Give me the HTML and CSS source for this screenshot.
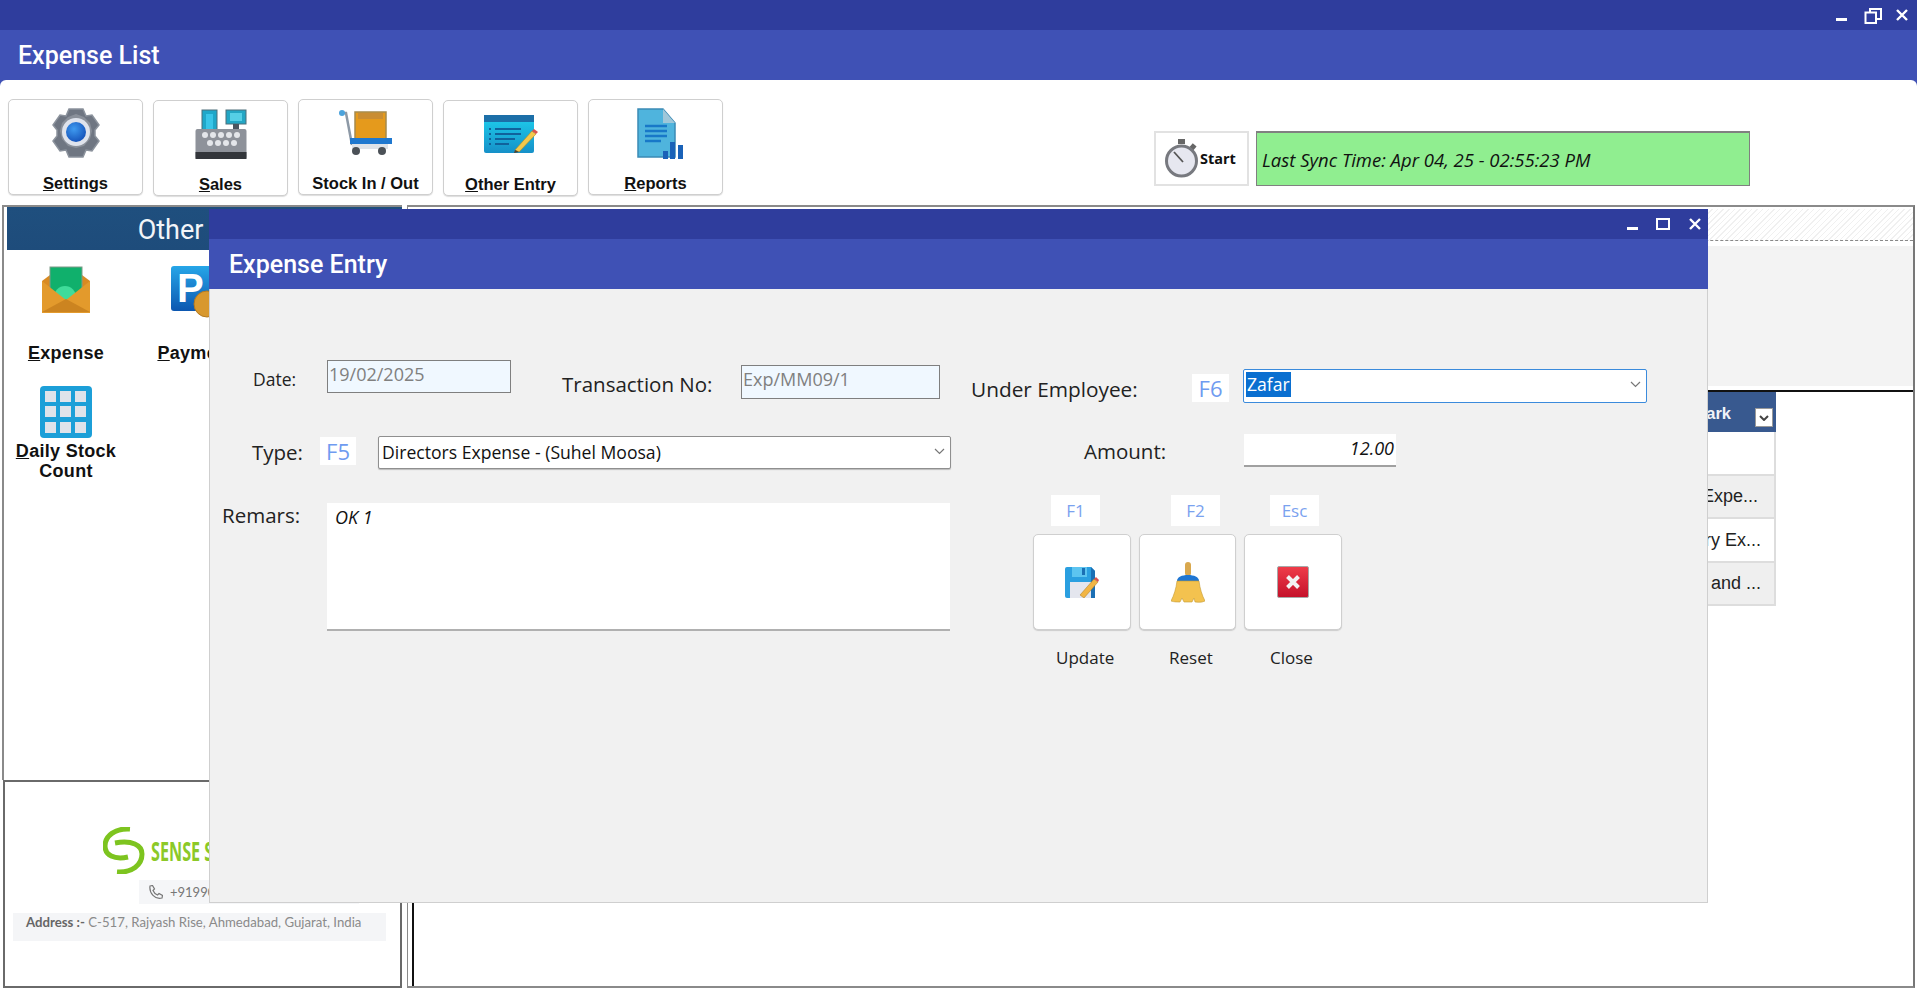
FILE: index.html
```html
<!DOCTYPE html>
<html lang="en">
<head>
<meta charset="utf-8">
<title>Expense List</title>
<link rel="stylesheet" href="styles.css">
</head>
<body>
<div class="app">
  <div class="titlebar">
    <div class="winctl">
      <svg class="ctl-min" width="11" height="4" viewBox="0 0 11 4"><rect y="0" width="11" height="3" fill="#fff"/></svg>
      <svg class="ctl-res" width="18" height="16" viewBox="0 0 18 16"><path d="M6 4V1h11v10h-4M1.500 4.500h10.500v10.500H1.500z" fill="none" stroke="#fff" stroke-width="2"/></svg>
      <svg class="ctl-x" width="12" height="12" viewBox="0 0 12 12"><path d="M1 1l10 10M11 1L1 11" stroke="#fff" stroke-width="2.400"/></svg>
    </div>
  </div>
  <div class="header"><span class="header-title">Expense List</span></div>
  <div class="toolbar-wrap">
  <div class="toolbar">
    <button class="tbtn">
      <svg width="54" height="50" viewBox="3 0 48 50"><defs><radialGradient id="gb" cx=".4" cy=".35" r=".7"><stop offset="0" stop-color="#3f9bf0"/><stop offset="1" stop-color="#1450b8"/></radialGradient></defs><path d="M20 1h14l3 7 6-1 7 10-4 5 0 6 4 5-7 10-6-1-3 7H20l-3-7-6 1-7-10 4-5 0-6-4-5 7-10 6 1z" fill="#6f7682" stroke="#8c939d" stroke-width="1.500"/><path d="M27 6l8 3 6 6 2 8-2 8-6 7-8 2-8-2-6-7-2-8 2-8 6-6z" fill="#8a909a"/><circle cx="27" cy="24" r="14" fill="#dfe3ec"/><circle cx="27" cy="24" r="10" fill="url(#gb)"/></svg>
      <span class="tlabel"><u>S</u>ettings</span>
    </button>
    <button class="tbtn tbtn-low">
      <svg width="52" height="51" viewBox="0 0 52 51"><rect x="7" y="1" width="15" height="22" fill="#1ea7c9" stroke="#4d6e7a"/><rect x="11" y="5" width="7" height="18" fill="#39c5e8"/><rect x="31" y="1" width="20" height="14" fill="#23a6c4" stroke="#4d6e7a"/><rect x="35" y="4" width="12" height="8" fill="#55cfe6"/><rect x="38" y="15" width="6" height="6" fill="#4c5560"/><rect x="0.500" y="20" width="51" height="30" rx="2" fill="#8e929a"/><rect x="0.500" y="43" width="51" height="7" fill="#33363b"/><g fill="#e4e6ea"><circle cx="10" cy="26" r="3"/><circle cx="18" cy="26" r="3"/><circle cx="26" cy="26" r="3"/><circle cx="34" cy="26" r="3"/><circle cx="42" cy="26" r="3"/><circle cx="15" cy="34" r="3"/><circle cx="23" cy="34" r="3"/><circle cx="31" cy="34" r="3"/><circle cx="39" cy="34" r="3"/></g></svg>
      <span class="tlabel"><u>S</u>ales</span>
    </button>
    <button class="tbtn">
      <svg class="ic-cart" width="54" height="46" viewBox="0 0 54 46"><rect x="16" y="2" width="31" height="30" fill="#e59a1c" stroke="#a58a4d" stroke-width="1.500"/><rect x="19" y="3" width="25" height="6" fill="#c98d33"/><path d="M3 3l4 0 6 32" fill="none" stroke="#8d99a6" stroke-width="2.500"/><circle cx="3" cy="3" r="3" fill="#4ba3dc"/><rect x="11" y="28" width="42" height="6" fill="#1f78cf"/><rect x="13" y="34" width="36" height="5" fill="#dfe3e8"/><circle cx="17" cy="41" r="4" fill="#4b5157"/><circle cx="43" cy="41" r="4" fill="#4b5157"/></svg>
      <span class="tlabel">Stock In / Out</span>
    </button>
    <button class="tbtn tbtn-low">
      <svg class="ic-form" width="56" height="40" viewBox="0 0 56 40"><defs><linearGradient id="gf" x1="0" y1="0" x2="0" y2="1"><stop offset="0" stop-color="#1ed0ee"/><stop offset="1" stop-color="#1690c8"/></linearGradient></defs><rect x="1" y="1" width="50" height="38" rx="2" fill="url(#gf)"/><rect x="1" y="1" width="50" height="7" fill="#1c6fa8"/><path d="M12 15h26M12 20h26M12 25h20M12 30h14" stroke="#10629c" stroke-width="2"/><path d="M6 15h2M6 20h2M6 25h2M6 30h2" stroke="#10629c" stroke-width="2"/><path d="M32 36l17-19 4 3-17 18z" fill="#f4c84c" stroke="#b58a20" stroke-width=".6"/><path d="M49 17l2-2 4 3-2 2z" fill="#d9534f"/><path d="M32 36l-1 3 5-1z" fill="#54422a"/></svg>
      <span class="tlabel"><u>O</u>ther Entry</span>
    </button>
    <button class="tbtn">
      <svg class="ic-report" width="48" height="52" viewBox="0 0 48 52"><path d="M1 1h25l12 14v34H1z" fill="#4fb4dd" stroke="#3b8ab5" stroke-width="1.500"/><path d="M26 1v14h12z" fill="#9fc7d9"/><path d="M8 18h22M8 23h22M8 28h22M8 33h16" stroke="#1878c8" stroke-width="2.500"/><g fill="#1a62b8"><rect x="26" y="43" width="5" height="8"/><rect x="33" y="34" width="5" height="17"/><rect x="41" y="37" width="5" height="14"/></g></svg>
      <span class="tlabel"><u>R</u>eports</span>
    </button>
    <button class="start">
      <svg width="34" height="39" viewBox="0 0 34 39"><rect x="13" y="0" width="7" height="5" fill="#666"/><rect x="26" y="5" width="5" height="5" transform="rotate(40 28 7)" fill="#666"/><circle cx="16.500" cy="22" r="15" fill="#e6e7f0" stroke="#77797f" stroke-width="3"/><path d="M9 13l9 10" stroke="#555" stroke-width="1.800"/></svg>
      <span class="start-text">Start</span>
    </button>
    <div class="sync">Last Sync Time: Apr 04, 25 - 02:55:23 PM</div>
  </div>
  </div>

  <div class="main">
    <div class="left">
      <div class="left-top">
        <div class="panel-head">Other Entry</div>
        <div class="tiles">
          <div class="tile">
            <svg class="tile-icon" width="48" height="48" viewBox="0 0 48 48"><path d="M0 15L8 9h32l8 6v31H0z" fill="#d98a22"/><rect x="8" y="1" width="32" height="30" fill="#10b06c" stroke="#7e9a88"/><circle cx="23" cy="31" r="11" fill="#3fdc9a"/><path d="M0 15l24 19 24-19v32H0z" fill="#e39a2c"/><path d="M0 46l24-13 24 13z" fill="#cc8420"/></svg>
            <span class="tile-label"><u>E</u>xpense</span>
          </div>
          <div class="tile">
            <svg class="tile-icon ic-pay" width="62" height="52" viewBox="0 0 62 52"><defs><linearGradient id="gp" x1="0" y1="0" x2="0" y2="1"><stop offset="0" stop-color="#26a6e8"/><stop offset="1" stop-color="#0c57b0"/></linearGradient></defs><rect x="1" y="0" width="44" height="45" rx="3" fill="url(#gp)"/><text class="p-glyph" x="7" y="36">P</text><circle cx="37" cy="38" r="13" fill="#d8982e" stroke="#b57a20"/></svg>
            <span class="tile-label"><u>P</u>ayment</span>
          </div>
          <div class="tile tile-wide">
            <svg class="tile-icon" width="52" height="52" viewBox="0 0 52 52"><rect width="52" height="52" rx="4" fill="#1c9fd8"/><g fill="#dfe3ea"><rect x="5" y="5" width="11" height="11"/><rect x="20" y="5" width="11" height="11"/><rect x="35" y="5" width="11" height="11"/><rect x="5" y="20" width="11" height="11"/><rect x="20" y="20" width="11" height="11"/><rect x="35" y="20" width="11" height="11"/><rect x="5" y="36" width="11" height="11"/><rect x="20" y="36" width="11" height="11"/><rect x="35" y="36" width="11" height="11"/></g></svg>
            <span class="tile-label tile-label-tight"><u>D</u>aily Stock<br>Count</span>
          </div>
        </div>
      </div>
      <div class="left-bottom">
        <div class="logo-row">
          <svg class="logo-mark" width="42" height="47" viewBox="0 0 42 47"><path d="M27 2C12 1 2 9 2 19c0 9 9 14 23 11M14 45c15 1 25-7 25-18 0-9-10-14-27-11" fill="none" stroke="#7dc41f" stroke-width="5"/></svg>
          <span class="logo-text">SENSE SOFTWARE SOLUTIONS</span>
        </div>
        <div class="phone">
          <svg width="15" height="15" viewBox="0 0 15 15"><path d="M2 1l2.500-.5 2 3.500-1.500 1.500c.8 2 2.300 3.500 4.500 4.500L11 8.500l3.500 2-.5 2.500c-7 2-13-5-12-12z" fill="none" stroke="#777" stroke-width="1.200"/></svg>
          <span>+919909000000</span>
        </div>
        <div class="address"><b>Address :-</b> C-517, Rajyash Rise, Ahmedabad, Gujarat, India</div>
      </div>
    </div>
    <div class="right">
      <div class="right-top">
        <div class="hatch"></div>
        <div class="summary"></div>
      </div>
      <div class="grid-area">
      <div class="grid">
        <div class="grid-head"><span class="head-text">Remark</span><span class="filter"><svg width="10" height="6" viewBox="0 0 10 6"><path d="M1 1l4 4 4-4" fill="none" stroke="#444" stroke-width="2"/></svg></span></div>
        <div class="grid-row"></div>
        <div class="grid-row alt"><span class="cell cell-a">Directors Expe...</span></div>
        <div class="grid-row"><span class="cell cell-b">Salary Ex...</span></div>
        <div class="grid-row alt"><span class="cell cell-b">Tea and ...</span></div>
      </div>
      </div>
    </div>
  </div>

  <div class="modal">
    <div class="titlebar modal-bar">
      <div class="winctl modal-ctl">
        <svg class="mctl-min" width="11" height="3" viewBox="0 0 11 3"><rect width="11" height="3" fill="#fff"/></svg>
        <svg class="mctl-max" width="14" height="12" viewBox="0 0 14 12"><rect x="1" y="1" width="12" height="10" fill="none" stroke="#fff" stroke-width="2"/></svg>
        <svg class="mctl-x" width="12" height="12" viewBox="0 0 12 12"><path d="M1 1l10 10M11 1L1 11" stroke="#fff" stroke-width="2.400"/></svg>
      </div>
    </div>
    <div class="header modal-head"><span class="modal-title">Expense Entry</span></div>
    <div class="modal-body">
      <div class="col-left">
        <div class="row row-1">
          <label class="lbl lbl-date">Date:</label>
          <input class="ro ro-date" value="19/02/2025" readonly>
          <label class="lbl lbl-txn">Transaction No:</label>
          <input class="ro ro-txn" value="Exp/MM09/1" readonly>
        </div>
        <div class="row row-2">
          <label class="lbl lbl-type">Type:</label>
          <span class="key key-f5">F5</span>
          <div class="combo combo-type"><span>Directors Expense - (Suhel Moosa)</span><svg width="11" height="7" viewBox="0 0 11 7"><path d="M1 1l4.500 4.500L10 1" fill="none" stroke="#777" stroke-width="1.200"/></svg></div>
        </div>
        <div class="row row-3">
          <label class="lbl lbl-rem">Remars:</label>
          <div class="textarea">OK 1</div>
        </div>
      </div>
      <div class="col-right">
        <div class="row">
          <label class="lbl lbl-emp">Under Employee:</label>
          <span class="key key-f6">F6</span>
          <div class="combo combo-emp"><span class="sel">Zafar</span><svg width="11" height="7" viewBox="0 0 11 7"><path d="M1 1l4.500 4.500L10 1" fill="none" stroke="#777" stroke-width="1.200"/></svg></div>
        </div>
        <div class="row row-amt">
          <label class="lbl lbl-amt">Amount:</label>
          <div class="amount">12.00</div>
        </div>
        <div class="keys">
          <span class="akey akey-1">F1</span>
          <span class="akey akey-2">F2</span>
          <span class="akey akey-3">Esc</span>
        </div>
        <div class="actions">
          <button class="abtn">
            <svg width="34" height="31" viewBox="0 0 34 31"><path d="M2 0h24l4 4v27H2a2 2 0 0 1-2-2V2a2 2 0 0 1 2-2z" fill="#2a9fe0"/><path d="M26 0l4 4v27h-4z" fill="#1b6fb4"/><rect x="7" y="0" width="15" height="10" fill="#5cc4f0"/><rect x="17" y="1" width="3" height="7" fill="#1b6fb4"/><rect x="5" y="15" width="21" height="16" fill="#e4e6ee"/><path d="M15 28l14-16 4 3-14 16z" fill="#f2b544" stroke="#a97a20" stroke-width=".5"/><path d="M29 12l2-2 3 3-1 2z" fill="#d9534f"/></svg>
          </button>
          <button class="abtn abtn-mid">
            <svg width="34" height="41" viewBox="0 0 34 41"><rect x="14" y="0" width="6" height="14" rx="3" fill="#d9a84e"/><path d="M6 19c0-4 5-6 11-6s11 2 11 6z" fill="#1f76d2"/><path d="M6 19h22c1 8 3 14 6 20-4 2-8 1-10 1l-1-4-2 4H13l-2-4-2 4c-3 0-6 0-9-1 3-6 5-12 6-20z" fill="#f3c24f" stroke="#c59a33" stroke-width=".6"/></svg>
          </button>
          <button class="abtn">
            <svg width="32" height="32" viewBox="0 0 32 32"><defs><linearGradient id="gx" x1="0" y1="0" x2="0" y2="1"><stop offset="0" stop-color="#ef3d4a"/><stop offset="1" stop-color="#c4102a"/></linearGradient></defs><rect x=".5" y=".5" width="31" height="31" rx="1.500" fill="url(#gx)" stroke="#a8a8a8"/><path d="M10.500 10.500l11 11M21.500 10.500l-11 11" stroke="#f3f3f3" stroke-width="4"/></svg>
          </button>
        </div>
        <div class="captions">
          <span class="cap cap-1">Update</span>
          <span class="cap cap-2">Reset</span>
          <span class="cap cap-3">Close</span>
        </div>
      </div>
    </div>
  </div>
</div>
</body>
</html>
```

FILE: styles.css
```css
* { box-sizing: border-box; }
html, body { margin: 0; padding: 0; height: 100%; overflow: hidden; background: #fff; }
body { font-family: "Open Sans", "Noto Sans", sans-serif; color: #111; }
.app { position: relative; width: 1917px; height: 988px; overflow: hidden; }

.titlebar { height: 30px; background: #2f3d9d; display: flex; justify-content: flex-end; }
.winctl { display: flex; align-items: flex-start; padding: 6px 9px 0 0; }
.ctl-min { margin: 12px 17px 0 0; }
.ctl-res { margin: 2px 14px 0 0; }
.ctl-x { margin: 3px 0 0 0; }

.header { height: 50px; background: #3f51b5; display: flex; align-items: center; padding-left: 18px; }
.header-title { font: 500 25px Roboto, sans-serif; color: #fff; }

.toolbar-wrap { background: #3f51b5; }
.toolbar { height: 125px; background: #fff; border-radius: 6px 6px 0 0; display: flex; align-items: flex-start; padding: 19px 0 0 8px; gap: 10px; }
.tbtn { width: 135px; height: 96px; background: #fff; border: 1px solid #cfcfcf; border-radius: 5px; box-shadow: 0 1px 1px #ddd; padding: 8px 0 2px; display: flex; flex-direction: column; align-items: center; justify-content: space-between; }
.tbtn-low { margin-top: 1px; }
.ic-cart { margin-top: 2px; }
.ic-form { margin-top: 5px; }
.ic-report { margin-left: 10px; }
.tlabel { font: bold 16.500px/18px "Liberation Sans", Arial, sans-serif; color: #111; }

.start { margin: 32px 0 0 421px; width: 95px; height: 55px; background: #fff; border: 2px solid #e2e2e2; display: flex; align-items: center; padding: 0 0 0 9px; gap: 1px; }
.start-text { font: 700 14.500px "Open Sans", sans-serif; color: #111; }
.sync { margin: 32px 0 0 -3px; width: 494px; height: 55px; background: #90ee90; border: 1px solid #808080; border-top-width: 2px; display: flex; align-items: center; padding-left: 5px; font: italic 18.500px "Open Sans", sans-serif; color: #111; }

.main { display: flex; height: 783px; padding-left: 2px; gap: 5px; }
.left { width: 400px; display: flex; flex-direction: column; }
.left-top { height: 575px; border: solid #8a8a8a; border-width: 2px 0 0 2px; padding-top: 0; }
.panel-head { height: 43px; margin: 0 0 0 3px; padding-top: 2px; background: linear-gradient(#1f4f7e, #1e4c7b); color: #f2f5f8; font: 400 27px/43px Roboto, sans-serif; text-align: center; }
.tiles { display: grid; grid-template-columns: 124px 124px; column-gap: 6px; padding-top: 16px; }
.tile { display: flex; flex-direction: column; align-items: center; }
.tile-icon { display: block; }
.ic-pay { margin-left: 10px; }
.tile-label { font: bold 18px/20px "Liberation Sans", Arial, sans-serif; text-align: center; margin-top: 29px; color: #111; letter-spacing: .3px; }
.tile-label-tight { margin-top: 3px; }
.tile:nth-child(2) .tile-label { margin-top: 25px; }
.tile-wide { grid-column: 1; margin-top: 23px; }
.p-glyph { font: bold 40px "Liberation Sans", Arial, sans-serif; fill: #fff; }

.left-bottom { height: 208px; width: 399px; margin-left: 1px; border: 2px solid #6a6a6a; padding-top: 45px; }
.logo-row { display: flex; align-items: center; padding-left: 98px; gap: 6px; height: 47px; overflow: hidden; }
.logo-mark { flex: none; }
.logo-text { font: 700 27px "Open Sans", sans-serif; color: #8cc928; transform: scaleX(.6); transform-origin: left center; white-space: nowrap; }
.phone { margin: 6px 0 0 134px; height: 24px; width: 220px; background: #f5f6f8; display: flex; align-items: center; padding-left: 9px; gap: 7px; font: 13px Lato, sans-serif; color: #777; }
.address { margin: 9px 0 0 8px; width: 373px; height: 28px; background: #f4f5f7; padding: 1px 0 0 13px; font: 13.200px/16px Lato, sans-serif; color: #8a8a8a; white-space: nowrap; }
.address b { color: #666; }

.right { width: 1508px; border: solid #8a8a8a; border-width: 2px 2px 2px 1px; display: flex; flex-direction: column; padding-left: 4px; border-right-color: #777; }
.right-top { height: 185px; border-bottom: 2px solid #111; padding-top: 2px; }
.hatch { height: 32px; border-bottom: 1px dashed #888; background: repeating-linear-gradient(135deg, #fff 0 3px, #f0f0f0 3px 4px); }
.summary { height: 140px; margin-top: 5px; background: #f3f3f3; }
.grid-area { flex: 1; border-left: 2px solid #111; margin-top: -2px; padding-top: 2px; }
.grid { width: 1362px; font: 18px "Liberation Sans", Arial, sans-serif; }
.grid-head { height: 40px; background: #38598f; display: flex; justify-content: flex-end; color: #f0f3f8; padding-right: 3px; gap: 24px; }
.head-text { font-weight: bold; font-size: 16.500px; line-height: 20px; margin-top: 11px; }
.filter { width: 18px; height: 19px; margin-top: 16px; background: #fff; border: 1px solid #999; display: flex; align-items: center; justify-content: center; }
.grid-row { height: 43.500px; background: #fff; border: solid #ddd; border-width: 0 2px 2px 0; display: flex; align-items: center; justify-content: flex-end; color: #222; }
.grid-row.alt { background: #efefef; }
.cell { padding-top: 1px; }
.cell-a { padding-right: 16px; }
.cell-b { padding-right: 13px; }

.modal { position: absolute; left: 209px; top: 209px; width: 1499px; height: 694px; display: flex; flex-direction: column; }
.modal-bar { flex: none; }
.modal-ctl { padding: 9px 7px 0 0; }
.mctl-min { margin: 9px 18px 0 0; }
.mctl-max { margin: 0 19px 0 0; }
.modal-head { flex: none; padding-left: 20px; }
.modal-title { font: 500 25px Roboto, sans-serif; color: #fff; }
.modal-body { flex: 1; background: #f1f1f1; border: 1px solid #cfcfcf; border-top: 0; display: flex; padding: 71px 0 0 12px; }
.col-left { width: 749px; }
.col-right { flex: 1; padding-top: 9px; }

.row { display: flex; align-items: flex-start; }
.row-2 { margin-top: 37px; }
.row-3 { margin-top: 34px; }
.row-amt { margin-top: 31px; }
.lbl { font: 400 20.500px/24px "Open Sans", sans-serif; color: #222; white-space: nowrap; }
.lbl-date { margin: 7px 0 0 31px; width: 74px; font-size: 17.500px; }
.lbl-txn { margin: 12px 0 0 51px; width: 179px; }
.lbl-type { margin: 4px 0 0 30px; width: 68px; }
.lbl-rem { width: 105px; }
.lbl-emp { margin-top: 8px; width: 221px; font-size: 20.800px; }
.lbl-amt { margin: 5px 0 0 113px; width: 160px; }
.ro { height: 33px; background: #f0f8ff; border: 1px solid #7f7f7f; font: 400 18px "Open Sans", sans-serif; color: #808080; padding: 0 0 6px 1px; outline: none; }
.ro-date { width: 184px; }
.ro-txn { width: 199px; height: 34px; margin-top: 5px; padding-bottom: 7px; }
.key { width: 36px; height: 28px; margin-top: 1px; background: #fff; color: #6f9bf0; font: 400 22px/28px "Open Sans", sans-serif; text-align: center; }
.key-f6 { margin-top: 5px; width: 37px; }
.combo { background: #fff; border: 1px solid #8f8f8f; border-radius: 2px; height: 33px; display: flex; align-items: center; justify-content: space-between; padding: 0 5px 2px 3px; font: 400 17.600px "Open Sans", sans-serif; color: #111; box-shadow: 0 1px 1px #bbb; }
.combo-type { width: 573px; margin-left: 22px; }
.combo-emp { width: 404px; height: 34px; margin-left: 14px; border-color: #3b8bdc; box-shadow: none; padding: 0 5px 3px 2px; }
.sel { background: #0a6fd0; color: #fff; padding: 0 1px; line-height: 25px; }
.textarea { width: 623px; height: 128px; background: #fff; border-bottom: 2px solid #b0b0b0; padding: 2px 8px; font: italic 18px "Open Sans", sans-serif; color: #111; }
.amount { width: 152px; height: 33px; background: #fff; border-bottom: 2px solid #a0a0a0; font: italic 18px/28px "Open Sans", sans-serif; color: #111; text-align: right; padding-right: 2px; }

.keys { display: flex; margin-top: 28px; font: 400 17px/31px "Open Sans", sans-serif; color: #7aa2ef; }
.akey { width: 49px; height: 31px; background: #fff; text-align: center; }
.akey-1 { margin-left: 80px; }
.akey-2 { margin-left: 71px; }
.akey-3 { margin-left: 50px; }
.actions { display: flex; gap: 8px; margin: 8px 0 0 62px; }
.abtn { width: 98px; height: 96px; background: #fff; border: 1px solid #cfcfcf; border-radius: 5px; box-shadow: 0 1px 1px #ccc; display: flex; align-items: center; justify-content: center; padding: 0; }
.abtn-mid { width: 97px; }
.captions { display: flex; margin: 16px 0 0 85px; font: 400 17px/24px "Open Sans", sans-serif; color: #222; }
.cap-1 { width: 113px; }
.cap-2 { width: 101px; }
```
